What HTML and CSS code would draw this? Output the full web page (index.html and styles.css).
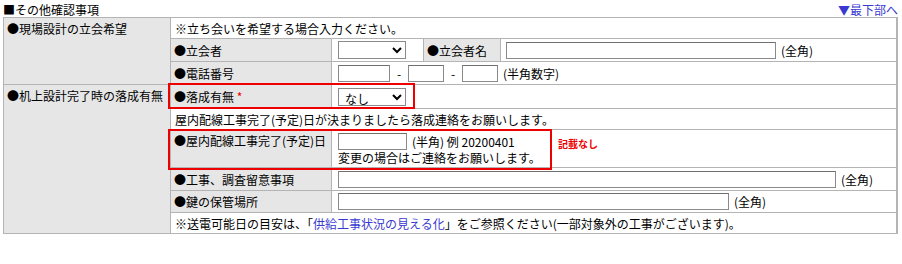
FILE: index.html
```html
<!DOCTYPE html>
<html>
<head>
    <title>その他確認事項</title>
    <link rel="stylesheet" href="styles.css">
</head>
<body>
    <div class="page">
        <div class="head">
            <span class="title">■その他確認事項</span>
            <a href="#bottom" class="to-bottom">▼最下部へ</a>
        </div>

        <table class="confirm">
            <colgroup>
                <col class="c1">
                <col class="c2">
                <col>
            </colgroup>
            <tr class="r1">
                <td class="label" rowspan="3"><div class="top">●現場設計の立会希望</div></td>
                <td colspan="2"><div class="cell text">※立ち会いを希望する場合入力ください。</div></td>
            </tr>
            <tr class="r2">
                <td class="label"><div class="cell">●立会者</div></td>
                <td>
                    <div class="cell split">
                        <div class="sel-cell">
                            <select class="sel"><option></option></select>
                        </div>
                        <div class="split-label">●立会者名</div>
                        <div class="split-value">
                            <input type="text" class="txt w-name"><span class="note">(全角)</span>
                        </div>
                    </div>
                </td>
            </tr>
            <tr class="r3">
                <td class="label"><div class="cell">●電話番号</div></td>
                <td>
                    <div class="cell field">
                        <input type="text" class="txt w-tel1"><span class="dash">-</span><input type="text" class="txt w-tel2"><span class="dash">-</span><input type="text" class="txt w-tel2"><span class="note">(半角数字)</span>
                    </div>
                </td>
            </tr>
            <tr class="r4">
                <td class="label" rowspan="6"><div class="top">●机上設計完了時の落成有無</div></td>
                <td class="label"><div class="cell">●落成有無&nbsp;<span class="req">*</span></div></td>
                <td>
                    <div class="cell field">
                        <select class="sel"><option>なし</option></select>
                    </div>
                </td>
            </tr>
            <tr class="r5">
                <td colspan="2"><div class="cell text">屋内配線工事完了(予定)日が決まりましたら落成連絡をお願いします。</div></td>
            </tr>
            <tr class="r6">
                <td class="label"><div class="top clip">●屋内配線工事完了(予定)日</div></td>
                <td>
                    <div class="cell field stack">
                        <div class="line"><input type="text" class="txt w-date"><span class="note">(半角) 例 20200401</span></div>
                        <div>変更の場合はご連絡をお願いします。</div>
                    </div>
                </td>
            </tr>
            <tr class="r7">
                <td class="label"><div class="cell">●工事、調査留意事項</div></td>
                <td>
                    <div class="cell field">
                        <input type="text" class="txt w-memo"><span class="note">(全角)</span>
                    </div>
                </td>
            </tr>
            <tr class="r8">
                <td class="label"><div class="cell">●鍵の保管場所</div></td>
                <td>
                    <div class="cell field">
                        <input type="text" class="txt w-key"><span class="note">(全角)</span>
                    </div>
                </td>
            </tr>
            <tr class="r9">
                <td colspan="2"><div class="cell text">※送電可能日の目安は、「<a href="#" class="link">供給工事状況の見える化</a>」をご参照ください(一部対象外の工事がございます)。</div></td>
            </tr>
        </table>

        <!-- annotation marks -->
        <div class="mark mark-1"></div>
        <div class="mark mark-2"></div>
        <div class="mark-note">記載なし</div>
    </div>
</body>
</html>
```

FILE: styles.css
```css
body {
    margin: 0;
    background-color: #fff;
    font-family: "Noto Sans CJK JP", "Noto Sans", sans-serif;
    font-size: 12px;
    color: #000;
}

.page {
    position: relative;
    padding: 0 4px 0 3px;
}

.head {
    display: flex;
    justify-content: space-between;
    align-items: flex-end;
    height: 17px;
    line-height: 15px;
}

.to-bottom {
    color: #3a3ad0;
    text-decoration: none;
}

.confirm {
    width: 895px;
    border-collapse: collapse;
    table-layout: fixed;
    background-color: #fff;
    border-right: 2px solid #b4b4b4;
}

.c1 {
    width: 167px;
}

.c2 {
    width: 161px;
}

.confirm td {
    border: 1px solid #b4b4b4;
    padding: 0;
    line-height: 15px;
    vertical-align: top;
    white-space: nowrap;
}

.confirm td.label {
    background-color: #e6e6e6;
}

.cell {
    display: flex;
    align-items: center;
    box-sizing: border-box;
    padding-left: 3px;
}

.cell.text {
    padding-left: 4px;
}

.cell.field {
    padding-left: 6px;
}

.top {
    padding: 3px 0 0 3px;
}

.clip {
    overflow: hidden;
}

.r1 .cell { height: 20px; }
.r2 .cell { height: 22px; }
.r3 .cell { height: 22px; }
.r4 .cell { height: 23px; }
.r5 .cell { height: 20px; }
.r6 .cell { height: 37px; }
.r7 .cell { height: 22px; }
.r8 .cell { height: 21px; }
.r9 .cell { height: 20px; }

.stack {
    flex-direction: column;
    align-items: flex-start;
    justify-content: flex-start;
    padding-top: 3px;
}

.line {
    display: flex;
    align-items: center;
    height: 17px;
}

.split {
    padding-left: 0;
    align-items: stretch;
}

.sel-cell {
    display: flex;
    align-items: center;
    width: 85px;
    padding-left: 6px;
}

.split-label {
    display: flex;
    align-items: center;
    width: 73px;
    padding-left: 3px;
    background-color: #e6e6e6;
    border-left: 1px solid #b4b4b4;
    border-right: 1px solid #b4b4b4;
}

.split-value {
    flex: 1;
    display: flex;
    align-items: center;
    padding-left: 5px;
}

.txt {
    height: 17px;
    box-sizing: border-box;
    border: 1px solid #8a8a8a;
    border-top-color: #707070;
    padding: 0 2px;
    margin: 0;
    font-family: inherit;
    font-size: 12px;
}

.sel {
    width: 68px;
    height: 18px;
    box-sizing: border-box;
    border: 1px solid #8a8a8a;
    border-radius: 0;
    margin: 0;
    padding: 0 2px;
    font-family: inherit;
    font-size: 12px;
    background-color: #fff;
}

.w-name { width: 270px; }
.w-tel1 { width: 52px; }
.w-tel2 { width: 36px; }
.w-date { width: 69px; }
.w-memo { width: 498px; }
.w-key { width: 391px; }

.dash {
    width: 18px;
    text-align: center;
}

.note {
    margin-left: 5px;
}

.req {
    color: #e00;
}

.link {
    color: #3a3ad0;
    text-decoration: none;
}

.mark {
    position: absolute;
    border: 2px solid #e00;
    box-sizing: border-box;
}

.mark-1 {
    left: 168px;
    top: 83px;
    width: 247px;
    height: 26px;
}

.mark-2 {
    left: 168px;
    top: 129px;
    width: 384px;
    height: 41px;
}

.mark-note {
    position: absolute;
    left: 558px;
    top: 138px;
    color: #e00;
    font-size: 10px;
    font-weight: bold;
    line-height: 12px;
}
```
